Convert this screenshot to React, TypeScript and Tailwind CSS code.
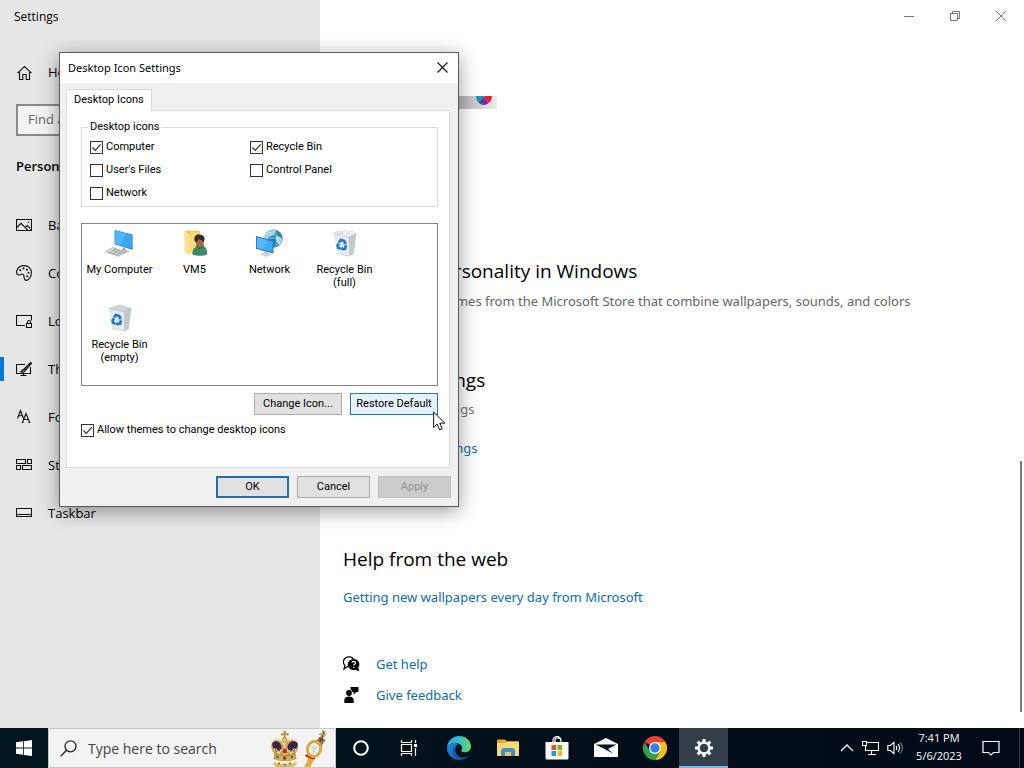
import { type ReactNode } from "react";

const ui = "font-['Open_Sans','Noto_Sans',sans-serif]";
const body = "font-['Noto_Sans','Open_Sans',sans-serif]";
const classic = "font-[Roboto,'Liberation_Sans',sans-serif]";

/* ---------- Settings icons ---------- */

function LineIcon({ children }: { children: ReactNode }) {
  return (
    <svg width="16" height="16" viewBox="0 0 16 16" fill="none" stroke="#111" strokeWidth="1.1" className="shrink-0">
      {children}
    </svg>
  );
}

const HomeIcon = () => (
  <LineIcon>
    <path d="M1.500 8.200 8.500 1.500l7 6.700M3.500 7v7.500h3.300V9.500h3.400v5h3.300V7" />
  </LineIcon>
);

const PictureIcon = () => (
  <LineIcon>
    <path d="M.5 2.500h15v11H.5zM.8 10.500 5 6.300l6.800 6.900M9.300 10.500l2-2 4 4" />
    <circle cx="12.300" cy="5.300" r=".7" fill="#111" stroke="none" />
  </LineIcon>
);

const PaletteIcon = () => (
  <LineIcon>
    <path d="M.7 5.800C1.600 2.500 4.800.6 8.300.6c4 0 7.100 2.900 7.100 6.800 0 4.300-2.700 8-5 8-3.600 0-1.200-4.300-3.300-6.100C5.500 7.900 4.300 10.500 2.500 9.900 1 9.400.3 7.500.7 5.800z" />
    <g fill="#111" stroke="none">
      <circle cx="4.300" cy="5.300" r="1" />
      <circle cx="7.500" cy="3.500" r="1" />
      <circle cx="10.900" cy="4.700" r="1" />
      <circle cx="12.500" cy="7.800" r="1" />
      <circle cx="11.200" cy="11.200" r="1" />
    </g>
  </LineIcon>
);

const LockScreenIcon = () => (
  <LineIcon>
    <path d="M9 12.500H.5v-10h15v5M10.500 10.500h5v4h-5zM11.500 10.500V9a1.500 1.500 0 0 1 3 0v1.500" />
  </LineIcon>
);

const ThemeIcon = () => (
  <LineIcon>
    <path d="M9 3.500H.5v9h14V6M7.500 12.500v2M4.500 14.500h6" />
    <path d="M14.800 1.300 8.200 7.800l1.300 1.300 6-6.700zM8 8.200c-1.800 0-1.500 2-3.300 2.600 2 .9 4.400.2 4.500-1.600" fill="#888" />
  </LineIcon>
);

const FontsIcon = () => (
  <LineIcon>
    <path d="M1.500 9.500 4.500 1.500l3 8M2.600 6.800h3.900M6.500 13.500l3.500-9 3.600 9M7.800 10.500h4.400M5.800 13.500h1.700M12.400 13.500h2" />
  </LineIcon>
);

const StartIcon = () => (
  <LineIcon>
    <path d="M.5 2.500h9v4h-9zM11.500 2.500h4v4h-4zM.5 8.500h4v4h-4zM6.500 8.500h9v4h-9z" />
  </LineIcon>
);

const TaskbarIcon = () => (
  <LineIcon>
    <path d="M.5 3.500h15v8H.5zM.5 9.500h15" />
  </LineIcon>
);

const navItems = [
  { label: "Background", icon: PictureIcon },
  { label: "Colors", icon: PaletteIcon },
  { label: "Lock screen", icon: LockScreenIcon },
  { label: "Themes", icon: ThemeIcon, active: true },
  { label: "Fonts", icon: FontsIcon },
  { label: "Start", icon: StartIcon },
  { label: "Taskbar", icon: TaskbarIcon },
];

function Sidebar() {
  return (
    <aside className="w-80 shrink-0 bg-[#e6e6e6]">
      <h1 className="h-8 px-3.5 pt-px text-xs leading-8">Settings</h1>
      <button className="mt-[17px] flex h-12 w-full items-center gap-4 px-4 text-[13px]">
        <HomeIcon />
        Home
      </button>
      <input
        type="text"
        aria-label="Find a setting"
        placeholder="Find a setting"
        className="mx-4 mt-[7px] block h-8 w-72 border-2 border-[#8a8a8a] bg-[#f3f3f3] px-2.5 pb-0.5 text-[13px] placeholder:text-[#666]"
      />
      <h2 className="mt-3 h-9 px-4 text-[13px] leading-9 font-semibold">Personalization</h2>
      <nav className="mt-[17px]">
        {navItems.map((item) => (
          <a
            key={item.label}
            href="#"
            className={`flex h-12 items-center border-l-4 border-transparent pl-3 text-[13px] ${
              item.active
                ? "bg-[linear-gradient(#0078d7,#0078d7)] bg-[length:4px_24px] bg-[position:left_center] bg-no-repeat bg-origin-border"
                : ""
            }`}
          >
            <item.icon />
            <span className="ml-4 pt-0.5">{item.label}</span>
          </a>
        ))}
      </nav>
    </aside>
  );
}

/* ---------- Main pane ---------- */

function WindowButtons() {
  return (
    <div className="flex h-8 justify-end">
      <button aria-label="Minimize" className="flex w-[46px] items-center justify-center">
        <svg width="10" height="10" stroke="#777"><path d="M0 5.500h10" /></svg>
      </button>
      <button aria-label="Restore" className="flex w-[46px] items-center justify-center">
        <svg width="11" height="11" fill="none" stroke="#777"><path d="M.5 2.500h7v7h-7zM2.500 2.500v-2h7v7h-2" /></svg>
      </button>
      <button aria-label="Close" className="flex w-[46px] items-center justify-center">
        <svg width="10" height="10" stroke="#777"><path d="m0 0 10 10M10 0 0 10" /></svg>
      </button>
    </div>
  );
}

function ThemeStrip() {
  return (
    <div className="mt-16 flex h-[13px] w-[154px] items-start justify-end bg-[linear-gradient(90deg,#bdbdbd_80%,#ececec)] pr-1">
      <svg width="18" height="9" viewBox="0 0 18 9">
        <path d="M1 0h8L3.500 6.500C2 5 1 3 1 0z" fill="#159bb5" />
        <path d="M9 0 3.500 6.500c1.200 1.300 2.200 2 4 2.400z" fill="#2b50b8" />
        <path d="M9 0 7 8.800c2.500.5 5-.3 6.500-1.800z" fill="#86249c" />
        <path d="M9 0h8c0 3-1.300 5.500-3.500 7z" fill="#ea1f2d" />
      </svg>
    </div>
  );
}

function MainPane() {
  return (
    <main className="flex min-w-0 flex-1 flex-col bg-white">
      <WindowButtons />
      <div className="flex flex-1">
        <div className={`min-w-0 flex-1 pl-[23px] whitespace-nowrap ${body}`}>
          <ThemeStrip />
          <h2 className={`mt-[148px] text-[19px] leading-7 ${ui}`}>Get more personality in Windows</h2>
          <p className="mt-1.5 text-[13px] leading-5 text-[#666]">
            Download free themes from the Microsoft Store that combine wallpapers, sounds, and colors
          </p>
          <h2 className={`mt-[55px] text-[19px] leading-7 ${ui}`}>Related Settings</h2>
          <p className="mt-[5px] text-[13px] leading-5 text-[#777]">Desktop icon settings</p>
          <a href="#" className="mt-[19px] block text-[13px] leading-5 text-[#0f6cae]">High contrast settings</a>
          <h2 className={`mt-[87px] text-[19px] leading-7 ${ui}`}>Help from the web</h2>
          <a href="#" className="mt-3.5 block text-[13px] leading-5 text-[#0f6cae]">
            Getting new wallpapers every day from Microsoft
          </a>
          <a href="#" className="mt-[47px] flex items-center gap-4 text-[13px] leading-5 text-[#0f6cae]">
            <svg width="17" height="16" viewBox="0 0 17 16">
              <path d="M5.500 9.800 1 13l.9-3.600A4.800 4.800 0 0 1 3 1.600C5.300.2 9 .6 10.500 3" fill="none" stroke="#000" strokeWidth="1.200" />
              <path d="M10.700 2.900a5.600 5.600 0 1 0 1.700 10.800l3.900 1.900-1.100-3.700a5.600 5.600 0 0 0-4.500-9z" fill="#000" />
              <path d="M9 6.800c.2-2 3.500-1.800 3.400.1 0 1.300-1.700 1.300-1.700 2.700M10.700 10.700v1.200" fill="none" stroke="#fff" strokeWidth="1.200" />
            </svg>
            Get help
          </a>
          <a href="#" className="mt-[11px] flex items-center gap-4 text-[13px] leading-5 text-[#0f6cae]">
            <svg width="17" height="16" viewBox="0 0 17 16" fill="#000">
              <circle cx="6" cy="6" r="2.900" />
              <path d="M1.300 16v-2.600C1.300 10.800 3 9.600 6 9.600s4.700 1.200 4.700 3.800V16zM7.500 0h8v5h-2l-3 2.500V5H9.300C9 3.700 8.500 3 7.500 2.500z" />
            </svg>
            Give feedback
          </a>
        </div>
        <div className="flex w-1 flex-col justify-end pb-4">
          <div className="h-[251px] w-0.5 bg-[#7a7a7a]" />
        </div>
      </div>
    </main>
  );
}

/* ---------- Desktop Icon Settings dialog ---------- */

function CheckBox({ label, checked = false }: { label: string; checked?: boolean }) {
  return (
    <label className="flex h-4 items-center gap-[3px]">
      <span className="grid">
        <input
          type="checkbox"
          defaultChecked={checked}
          className="peer col-start-1 row-start-1 size-[13px] appearance-none border border-[#333] bg-white"
        />
        <svg
          viewBox="0 0 13 13"
          className="pointer-events-none invisible col-start-1 row-start-1 size-[13px] peer-checked:visible"
          fill="none"
          stroke="#333"
          strokeWidth="1.200"
        >
          <path d="m2.500 6.500 2.800 2.800 5.400-6" />
        </svg>
      </span>
      {label}
    </label>
  );
}

const MyComputerIcon = () => (
  <svg width="31" height="28" viewBox="0 1 31 31">
    <path d="m10 2 20 5v17L10 18z" fill="#2b7fc4" />
    <path d="m10.800 3 18.400 4.700v15L10.800 17.300z" fill="#3aa9f5" />
    <path d="m10.800 3 12 3-6 13-6-1.700z" fill="#62c0ff" opacity=".55" />
    <path d="m19 21 3 1v4l-3-1z" fill="#9aa5ad" />
    <path d="m14 26 6-2.200 6 2-6 2.700z" fill="#c6cdd1" stroke="#98a2a8" strokeWidth=".5" />
    <path d="m0 26 8-4.500 15 4.700-8.500 5z" fill="#dce0e2" stroke="#8e989d" strokeWidth=".7" />
    <path d="m3 26.200 12 3.700M6 24.600l12 3.700M8 23.300l11 3.400M4 28l8-5M8 29l8-4.500M12 30.200l8-4.500" stroke="#8e989d" strokeWidth=".7" />
  </svg>
);

const UserFolderIcon = () => (
  <svg width="28" height="28" viewBox="0 1 32 32">
    <path d="M4 3h16l2 1v24l-17-1z" fill="#f0c75e" />
    <path d="m4 3 7 5v23l-7-4z" fill="#ffe28c" />
    <path d="M11 8V5l10-1v23l-10 1z" fill="#fbd977" />
    <path d="M13 30c0-7 3-9 7-10l6 1c3 1 4 4 4 9-4 2-13 2-17 0z" fill="#3c8a69" />
    <path d="m17 20 4 4 5-3 1-2h-9z" fill="#276a50" />
    <path d="M17 11h9v6c0 3-2 5-4 5s-5-3-5-6z" fill="#a66a42" />
    <path d="M15.500 14c-1-5 2-7 6-6.500 4 0 6.500 2.500 5 7l-1.500 2c0-3-2-3-5-3.500-1 0-1 3-2.500 4z" fill="#322b28" />
  </svg>
);

const NetworkIcon = () => (
  <svg width="28" height="28" viewBox="1 0 32 32">
    <circle cx="21" cy="11" r="10.500" fill="#2b83b8" />
    <path d="M12 6c3-4 8-6 12-4l-3 5-5 2-3 4-3-1zM24 8l5 1 2 4-3 6-4-5zM17 15l4 2-1 4-4-1z" fill="#9fd3ec" />
    <path d="M13 5c7-4 14 4 15 13M21 .5c5 5 6 14 2 21M11 13c7-4 15-3 20-1" fill="none" stroke="#d9eff9" strokeWidth=".6" />
    <path d="m1 8 20 5.500V28L1 22.500z" fill="#2475b8" />
    <path d="m2 9.300 18 5v12.300L2 21.700z" fill="#3dabf6" />
    <path d="m2 9.300 12 3.200L9 23.400l-7-1.700z" fill="#68c3ff" opacity=".5" />
    <path d="m11 25 3 1v3l-3-1z" fill="#8fa0ab" />
    <path d="m7 29 5-1.800 6 1.500-5 2.600z" fill="#d6dde0" stroke="#9ba5aa" strokeWidth=".5" />
  </svg>
);

function RecycleBinIcon({ full = false }: { full?: boolean }) {
  return (
    <svg width="28" height="28" viewBox="1 0 32 32">
      {full ? (
        <path d="m4 5 5-3 4 1 4-2 4 2 4-1 5 4-9 5-10-1z" fill="#f1f3f4" stroke="#c4cace" strokeWidth=".6" />
      ) : (
        <path d="m4 5 13-4 13 4-9 4z" fill="#cfd4d7" stroke="#bcc2c6" strokeWidth=".6" />
      )}
      <path d="m4 5 17 4 1 22-14-3z" fill="#e8ebed" />
      <path d="m21 9 9-4-3 23-5 3z" fill="#c3c8cb" />
      <path d="m4 5 17 4 9-4M8 28l14 3 5-3" fill="none" stroke="#b4bbbf" strokeWidth=".6" />
      <g fill="none" stroke="#1c7bd0" strokeWidth="3">
        <path d="m10.200 15.500 1.900-2.900 3.900 1 1 2.200" />
        <path d="m18 18.500-.8 4-2.700.3" />
        <path d="m12 22.500-3-1-.4-3.200" />
      </g>
      <path d="m14.600 17.500 4.500.3-.8-4zM14.800 20l-3.200 2.800 3.300 2.300zM6.500 19l2.400-3.900 3 3.600z" fill="#1c7bd0" />
      {full && <path d="m11 6 2-3 2 3m3 1 3-3 1 3M8 4l1 3" fill="none" stroke="#aeb6bb" strokeWidth=".7" />}
    </svg>
  );
}

const desktopIcons = [
  { label: "My Computer", icon: <MyComputerIcon /> },
  { label: "VM5", icon: <UserFolderIcon /> },
  { label: "Network", icon: <NetworkIcon /> },
  { label: "Recycle Bin (full)", icon: <RecycleBinIcon full /> },
  { label: "Recycle Bin (empty)", icon: <RecycleBinIcon /> },
];

function DesktopIconDialog() {
  return (
    <div
      role="dialog"
      aria-labelledby="dialog-title"
      className={`absolute top-[52px] left-[59px] flex w-[400px] flex-col border border-[#5a5a5a] bg-[#f0f0f0] text-[11px] shadow-[0_4px_18px_rgba(0,0,0,0.4)] ${classic}`}
    >
      <div className={`flex h-[30px] items-center justify-between bg-white pl-2 ${body}`}>
        <h2 id="dialog-title" className="text-[11px]">Desktop Icon Settings</h2>
        <button aria-label="Close" className="flex h-full w-8 items-center justify-center pb-0.5 pl-px">
          <svg width="11" height="11" stroke="#111" strokeWidth="1.100"><path d="m.5.5 10 10M10.500.5l-10 10" /></svg>
        </button>
      </div>

      <div className="px-1.5 pt-1.5">
        <div role="tablist" className="flex">
          <button
            role="tab"
            aria-selected="true"
            className="relative z-10 -mb-px h-[22px] border border-b-0 border-[#d9d9d9] bg-white px-[7px]"
          >
            Desktop Icons
          </button>
        </div>

        <div role="tabpanel" className="mr-0.5 h-[358px] border border-[#dcdcdc] bg-white pt-2 pr-[11px] pl-3.5">
          <fieldset className="h-[88px] border border-[#dcdcdc] pl-2">
            <legend className="-ml-0.5 px-0.5 leading-4">Desktop icons</legend>
            <div className="grid grid-cols-[160px_1fr] gap-y-[7px] pt-1">
              <CheckBox label="Computer" checked />
              <CheckBox label="Recycle Bin" checked />
              <CheckBox label="User's Files" />
              <CheckBox label="Control Panel" />
              <CheckBox label="Network" />
            </div>
          </fieldset>

          <ul className="mt-4 grid h-[163px] grid-cols-[repeat(4,75px)] content-start border border-[#828790]">
            {desktopIcons.map((item) => (
              <li key={item.label} className="flex h-[75px] flex-col items-center px-1 pt-[5px] text-center leading-[13px]">
                {item.icon}
                <span className="mt-1.5">{item.label}</span>
              </li>
            ))}
          </ul>

          <div className="mt-[7px] flex justify-end gap-2">
            <button className="h-[22px] w-[88px] border border-[#adadad] bg-[#e1e1e1]">Change Icon...</button>
            <button className="h-[22px] w-[88px] border border-[#2a78b5] bg-[#e5f1fb]">Restore Default</button>
          </div>

          <div className="mt-[7px]">
            <CheckBox label="Allow themes to change desktop icons" checked />
          </div>
        </div>
      </div>

      <div className="mt-2 mr-[7px] mb-2 flex justify-end gap-2">
        <button className="h-[22px] w-[73px] border-2 border-[#1f6fae] bg-[#e1e1e1]">OK</button>
        <button className="h-[22px] w-[73px] border border-[#adadad] bg-[#e1e1e1]">Cancel</button>
        <button disabled className="h-[22px] w-[73px] border border-[#bfbfbf] bg-[#cccccc] text-[#939393]">Apply</button>
      </div>
    </div>
  );
}

/* ---------- Taskbar ---------- */

const CrownArt = () => (
  <svg width="60" height="38" viewBox="0 0 60 38" className="shrink-0">
    <path d="M3 14c3-5 8-3 12 1 4-4 9-6 13-1 3 5-1 9-3 14H7C5 23 0 19 3 14z" fill="#c9a24a" />
    <path d="M3.500 14c2-3 8-2 9 4 .5 3-2 5-5 5-2-3-5-5-4-9zM28.500 14c-2-3-9-2-10 4 0 4 3 5 6 5 2-3 5-5 4-9z" fill="#392451" />
    <path d="M4 12c3-3 9-2 11 3 3-5 9-6 13-3M15.500 11v17M5 21c2-2 3 1 5 3 2-4 4-4 6-1 2-3 4-2 6 1 2-2 3-5 5-3" fill="none" stroke="#efdc98" strokeWidth="2" strokeDasharray="1.500 .7" />
    <path d="M14.500 2h2.500l-.5 2.500 3-.5v2.500l-3-.4.5 3.400h-2.500l.5-3.400-3 .4V4l3 .5z" fill="#9c8c3c" stroke="#ddc878" strokeWidth=".5" />
    <circle cx="15.700" cy="11" r="2.300" fill="#e3cb76" stroke="#8b6a20" strokeWidth=".6" />
    <path d="M6 25c6 2 14 2 20 0l1 5c-6 3-16 3-22 0z" fill="#d3ad4e" stroke="#80611e" strokeWidth=".5" />
    <path d="M5 30c7 3 15 3 22 0l1 6c-7 4-17 4-24 0z" fill="#f4ecd3" />
    <path d="M4.500 33c6 3 17 3 23 0v3c-6 4-17 4-23 0z" fill="#dabc62" />
    <g>
      <circle cx="15.700" cy="22" r="2.200" fill="#bd2130" />
      <circle cx="8.500" cy="28" r="1.300" fill="#3a7a69" />
      <circle cx="15.700" cy="29" r="1.700" fill="#7c303a" />
      <circle cx="23" cy="28" r="1.300" fill="#3a7a69" />
      <circle cx="10" cy="34.500" r="1.100" fill="#be4a42" />
      <circle cx="21" cy="34.500" r="1.100" fill="#be4a42" />
      <circle cx="15.700" cy="35.500" r="1.100" fill="#48769a" />
    </g>
    <path d="m40 27 6 1-5 11h-6z" fill="#e1ae43" />
    <path d="M36 27c1-3 4-1 6 0 2-1 5 0 4 3-3 1-6-1-10-3z" fill="#c32828" />
    <path d="m47 13 4-5 5 3-4 6z" fill="#a98340" stroke="#6f4d20" strokeWidth=".7" />
    <path d="m52 8 2-6 2 1-2 6M50 5l7 1" stroke="#bba25b" strokeWidth="1.600" />
    <circle cx="52" cy="11" r="2" fill="#70436b" />
    <ellipse cx="45" cy="20" rx="6.500" ry="7.500" fill="#f0f4ec" stroke="#dca842" strokeWidth="3" transform="rotate(15 45 20)" />
    <path d="m42 16 4-2 3 4-1 6-4 2-3-4z" fill="#dfe8e2" stroke="#fff" strokeWidth=".8" />
    <path d="m42 16 3 4-1 6m1-6 4-2" fill="none" stroke="#a9bdb4" strokeWidth=".5" />
  </svg>
);

const EdgeIcon = () => (
  <svg width="24" height="24" viewBox="0 0 24 24">
    <defs>
      <linearGradient id="edge-top" x1="0" y1=".5" x2="1" y2=".5">
        <stop offset="0" stopColor="#2aa9e4" />
        <stop offset=".55" stopColor="#35c1c8" />
        <stop offset="1" stopColor="#72d957" />
      </linearGradient>
      <linearGradient id="edge-low" x1="0" y1="0" x2="1" y2="1">
        <stop offset="0" stopColor="#1b8fdd" />
        <stop offset="1" stopColor="#0f4f9e" />
      </linearGradient>
    </defs>
    <path d="M.2 10.500C1 4.500 6 0 12 0c7 0 12 5 12 10.300 0 4.200-3 6-6 6-2.500 0-4.200-.9-3.600-1.900 1-1.400 1-2.800.3-4.200C12.500 6.300 5 5.500.2 10.500z" fill="url(#edge-top)" />
    <path d="M.1 11C2.500 7 8 6 11.500 8c-3 1-4.200 4-3.300 7.500 1 4 4.300 6.800 8.300 7-1.500 1-3 1.500-4.800 1.500C5 23.800-.6 18 .1 11z" fill="url(#edge-low)" />
    <path d="M10.300 10c-2.600 2-2.500 6 0 9 2.500 3 7.500 3.500 11.700.2-1.500 2.300-3.200 3.600-5.300 4.200C10 23.500 5.500 19 6 14c.2-2.300 2-3.800 4.300-4z" fill="#174f99" />
  </svg>
);

const ExplorerIcon = () => (
  <svg width="22" height="20" viewBox="0 0 22 20">
    <path d="M0 1.500h8l2 2h11V7H0z" fill="#e5a632" />
    <path d="M0 5h8l2-1.500h12V18H0z" fill="#ffd773" />
    <path d="M4 18v-6l2-2h10l2 2v6h-4v-4H8v4z" fill="#3f91c8" />
    <path d="M8 14h6v4H8z" fill="#f0c45c" />
  </svg>
);

const StoreIcon = () => (
  <svg width="24" height="24" viewBox="0 0 24 24">
    <path d="M8 7V4.500a4 4 0 0 1 8 0V7M10 6V4c0-3 6-3 6 1" fill="none" stroke="#fff" strokeWidth="1.200" />
    <path d="M.5 6h23v16a1.500 1.500 0 0 1-1.500 1.500H2A1.500 1.500 0 0 1 .5 22z" fill="#fff" />
    <path d="M6.500 9H11v5H6.500z" fill="#e84f22" />
    <path d="M12.500 9H17v5h-4.500z" fill="#7bb51d" />
    <path d="M6.500 15H11v5H6.500z" fill="#169fe1" />
    <path d="M12.500 15H17v5h-4.500z" fill="#fbb813" />
  </svg>
);

const MailIcon = () => (
  <svg width="24" height="20" viewBox="0 0 24 20">
    <path d="M0 6 12 0l12 6v13H0z" fill="#fff" />
    <path d="M1.500 6.500h21L14 11l5 4.500L10.500 11z" fill="#07131c" />
  </svg>
);

const ChromeIcon = () => (
  <svg width="24" height="24" viewBox="0 0 24 24">
    <path d="M12 12 1.600 6A12 12 0 0 1 22.400 6z" fill="#ea4335" />
    <path d="M12 12V6h10.400A12 12 0 0 1 12 24l5.200-9z" fill="#fbbc05" />
    <path d="m12 12 5.200 3L12 24A12 12 0 0 1 1.600 6l5.200 9z" fill="#31a350" />
    <circle cx="12" cy="12" r="6" fill="#fff" />
    <circle cx="12" cy="12" r="4.700" fill="#3b7ded" />
  </svg>
);

const GearIcon = () => (
  <svg width="20" height="20" viewBox="0 0 20 20" fill="none" stroke="#fff">
    <circle cx="10" cy="10" r="5.500" strokeWidth="2.400" />
    <path d="M10 4V1M10 19v-3M4 10H1M19 10h-3M5.800 5.800 3.600 3.600M16.400 16.400l-2.200-2.200M5.800 14.200l-2.200 2.200M16.400 3.600l-2.200 2.200" strokeWidth="3" />
  </svg>
);

const pinnedApps = [
  {
    label: "Cortana",
    icon: (
      <svg width="16" height="16" fill="none" stroke="#fff" strokeWidth="2">
        <circle cx="8" cy="8" r="6.800" />
      </svg>
    ),
  },
  {
    label: "Task View",
    icon: (
      <svg width="20" height="16" fill="none" stroke="#fff" strokeWidth="1.200">
        <path d="M1.500 0v2.500h10V0M1.500 4.500h10v7h-10zM1.500 16v-2.500h10V16M15.500 0v3M15.500 8v8" />
        <path d="M14 4h3v3h-3z" fill="#fff" stroke="none" />
      </svg>
    ),
  },
  { label: "Microsoft Edge", icon: <EdgeIcon /> },
  { label: "File Explorer", icon: <ExplorerIcon /> },
  { label: "Microsoft Store", icon: <StoreIcon /> },
  { label: "Mail", icon: <MailIcon /> },
  { label: "Google Chrome", icon: <ChromeIcon /> },
  { label: "Settings", icon: <GearIcon />, active: true },
];

function Taskbar() {
  return (
    <footer className="flex h-10 shrink-0 bg-[linear-gradient(90deg,#03171f,#020a17)] text-white">
      <button aria-label="Start" className="flex w-12 items-center justify-center">
        <svg width="16" height="16" viewBox="0 0 16 16" fill="#fff">
          <path d="m0 2.300 7.200-1v6.300H0zM8 1.200 16 0v7.600H8zM0 8.400h7.200v6.300L0 13.700zM8 8.400h8V16l-8-1.100z" />
        </svg>
      </button>
      <div className="flex w-72 items-center border border-[#c9c9c9] bg-[#f3f3f3] pl-[11px]">
        <svg width="17" height="17" viewBox="0 0 17 17" fill="none" stroke="#222" strokeWidth="1.300" className="shrink-0">
          <circle cx="10.500" cy="6.300" r="5.500" />
          <path d="M6.500 10.300.7 16.200" />
        </svg>
        <input
          type="text"
          aria-label="Search"
          placeholder="Type here to search"
          className="ml-[11px] min-w-0 flex-1 pt-0.5 text-sm placeholder:text-[#444]"
        />
        <CrownArt />
        <span className="w-1.5 shrink-0" />
      </div>
      {pinnedApps.map((app) => (
        <button
          key={app.label}
          aria-label={app.label}
          className={`flex w-[49px] items-center justify-center ${
            app.active ? "border-b-2 border-[#76b9ed] bg-[#343e48] pt-0.5" : ""
          }`}
        >
          {app.icon}
        </button>
      ))}
      <div className="ml-auto flex items-center">
        <button aria-label="Show hidden icons" className="mr-2">
          <svg width="14" height="14" fill="none" stroke="#fff" strokeWidth="1.300"><path d="m1 10 6-6 6 6" /></svg>
        </button>
        <button aria-label="Network" className="mr-2">
          <svg width="17" height="16" fill="none" stroke="#fff" strokeWidth="1.100">
            <path d="M5 2.500h11.500v8H3.500V6M6 14.500h8M9.500 10.500v4M.5 1.500h4v4h-4z" />
          </svg>
        </button>
        <button aria-label="Volume" className="mr-2.5">
          <svg width="17" height="16" fill="none" stroke="#fff" strokeWidth="1.100">
            <path d="M.8 5.500h2.500L7 2.500v11l-3.700-3H.8zM9 6c1 1 1 3 0 4M11 4c2 2 2 6 0 8" />
            <path d="M13.200 2.500c3 3 3 8 0 11" stroke="#777" />
          </svg>
        </button>
        <button className="w-[50px] pb-0.5 text-center text-[11px] leading-[18px]">
          7:41 PM
          <br />
          5/6/2023
        </button>
        <button aria-label="Notifications" className="mr-[19px] ml-[18px]">
          <svg width="18" height="18" fill="none" stroke="#fff" strokeWidth="1.200">
            <path d="M1 2.500h16v11h-5.500L9 16l-2.500-2.500H1z" />
          </svg>
        </button>
        <span className="mr-1 h-10 w-px bg-[#33414a]" />
      </div>
    </footer>
  );
}

export default function App() {
  return (
    <div className={`relative flex min-h-screen flex-col overflow-hidden text-black ${ui}`}>
      <div className="flex flex-1">
        <Sidebar />
        <MainPane />
      </div>
      <Taskbar />
      <DesktopIconDialog />
      <svg width="13" height="20" viewBox="0 0 13 20" className="pointer-events-none absolute top-[411px] left-[433px]">
        <path d="M.6 1v15.500l3.600-3.400 2.500 5.800 2.600-1.100-2.500-5.700h5z" fill="#fff" stroke="#111" />
      </svg>
    </div>
  );
}
